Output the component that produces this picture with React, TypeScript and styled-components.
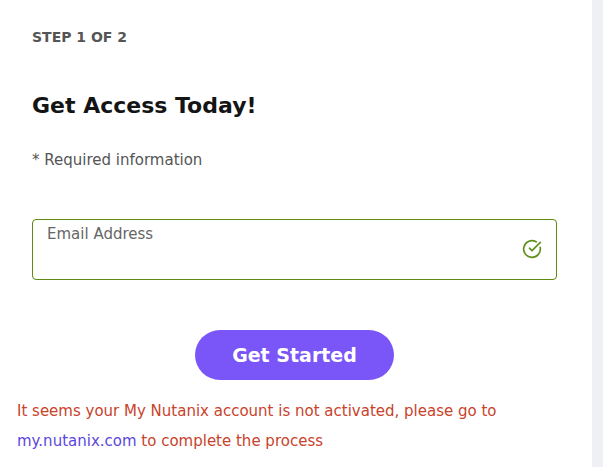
import React from 'react';
import styled, { createGlobalStyle } from 'styled-components';
import { CircleCheckBig } from 'lucide-react';

const GlobalStyle = createGlobalStyle`
  html, body {
    margin: 0;
    padding: 0;
    background: #eef0f5;
  }
  body {
    font-family: "DejaVu Sans", "Open Sans", Arial, sans-serif;
  }
`;

const Page = styled.div`
  display: flex;
  width: 603px;
  height: 467px;
  overflow: hidden;
`;

const Panel = styled.main`
  width: 592px;
  background: #ffffff;
  padding: 0 17px;
  box-sizing: border-box;
`;

const Side = styled.aside`
  flex: 1;
  background: #eef0f5;
`;

const Form = styled.div`
  display: flex;
  flex-direction: column;
  width: 525px;
  margin-left: 15px;
`;

const Step = styled.div`
  margin-top: 29px;
  font-size: 14px;
  font-weight: 700;
  color: #555555;
`;

const Title = styled.h1`
  margin: 48px 0 0;
  font-size: 22px;
  font-weight: 700;
  color: #141414;
`;

const Required = styled.p`
  margin: 33px 0 0;
  font-size: 15px;
  color: #555555;
`;

const Field = styled.div`
  position: relative;
  margin-top: 50px;
  height: 61px;
  border: 1px solid #5f8a12;
  border-radius: 4px;
  box-sizing: border-box;
  padding: 5px 14px;
`;

const Label = styled.label`
  display: block;
  font-size: 15px;
  color: #666666;
`;

const Valid = styled.span`
  position: absolute;
  right: 14px;
  top: 19px;
  display: flex;
  color: #5f9119;
`;

const Button = styled.button`
  align-self: center;
  margin-top: 50px;
  width: 199px;
  height: 50px;
  border: none;
  border-radius: 25px;
  background: #7a55f8;
  color: #ffffff;
  font-family: inherit;
  font-size: 19px;
  font-weight: 700;
  cursor: pointer;
`;

const Error = styled.p`
  margin: 16px 0 0;
  font-size: 15px;
  line-height: 30px;
  color: #c8432b;
`;

const Link = styled.a`
  color: #5b47e0;
  text-decoration: none;
`;

export default function App() {
  return (
    <>
      <GlobalStyle />
      <Page>
        <Panel>
          <Form>
            <Step>STEP 1 OF 2</Step>
            <Title>Get Access Today!</Title>
            <Required>* Required information</Required>
            <Field>
              <Label>Email Address</Label>
              <Valid>
                <CircleCheckBig size={20} strokeWidth={2} />
              </Valid>
            </Field>
            <Button>Get Started</Button>
          </Form>
          <Error>
            It seems your My Nutanix account is not activated, please go to
            <br />
            <Link href="#">my.nutanix.com</Link> to complete the process
          </Error>
        </Panel>
        <Side />
      </Page>
    </>
  );
}
